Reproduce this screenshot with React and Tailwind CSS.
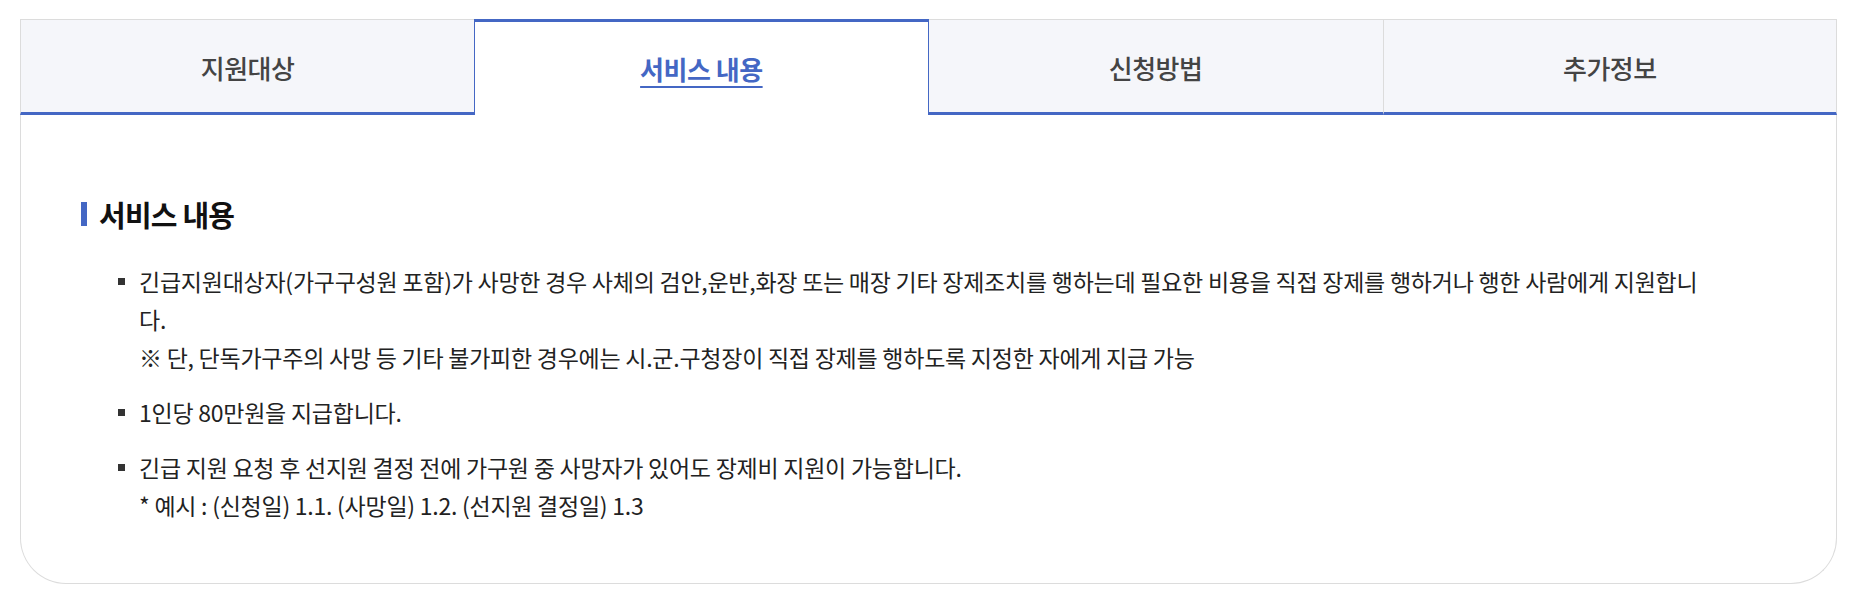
import React from "react";

const tabs = ["지원대상", "서비스 내용", "신청방법", "추가정보"];

const Bullet = ({ children }) => (
  <li className="relative pl-[21px]">
    <span className="absolute left-0 top-[16px] h-[7px] w-[7px] bg-[#333]" />
    {children}
  </li>
);

const App = () => {
  const active = 1;

  return (
    <div
      className="pl-[20px] pt-[19px] pb-[13px] bg-white"
      style={{ fontFamily: '"Noto Sans CJK KR", "Noto Sans", sans-serif' }}
    >
      <div className="w-[1817px] border border-t-0 border-[#dcdcdc] rounded-b-[46px] bg-white">
        {/* tab bar */}
        <ul className="grid grid-cols-4 -mx-px">
          {tabs.map((t, i) =>
            i === active ? (
              <li
                key={t}
                className="h-[96px] flex items-center justify-center border-t-[3px] border-x border-[#4467c4] bg-white"
              >
                <a
                  href="#"
                  className="text-[26px] font-bold text-[#4467c4] underline underline-offset-[6px] decoration-2 tracking-[-0.5px]"
                >
                  {t}
                </a>
              </li>
            ) : (
              <li
                key={t}
                className={`h-[96px] flex items-center justify-center bg-[#f5f6fa] border-t border-[#dcdcdc] border-b-[3px] border-b-[#4467c4] ${
                  i === 3 ? "border-l border-r" : i === 0 ? "border-l" : ""
                }`}
              >
                <span className="pt-[2px] text-[26px] font-medium text-[#444] tracking-[-0.5px]">
                  {t}
                </span>
              </li>
            )
          )}
        </ul>

        {/* panel */}
        <div className="pl-[60px] pr-[120px] pt-[82px] pb-[59px]">
          <h3 className="flex items-center gap-[12px] text-[29px] font-bold text-[#111] tracking-[-0.8px] leading-[34px]">
            <span className="inline-block w-[6px] h-[24px] bg-[#4467c4]" />
            서비스 내용
          </h3>

          <ul className="mt-[31px] pl-[37px] flex flex-col gap-[17px] text-[23px] leading-[38px] text-[#222] tracking-[-0.25px]">
            <Bullet>
              긴급지원대상자(가구구성원 포함)가 사망한 경우 사체의 검안,운반,화장 또는 매장 기타 장제조치를
              행하는데 필요한 비용을 직접 장제를 행하거나 행한 사람에게 지원합니다.
              <br />※ 단, 단독가구주의 사망 등 기타 불가피한 경우에는 시.군.구청장이 직접 장제를 행하도록 지정한 자에게 지급 가능
            </Bullet>
            <Bullet>1인당 80만원을 지급합니다.</Bullet>
            <Bullet>
              긴급 지원 요청 후 선지원 결정 전에 가구원 중 사망자가 있어도 장제비 지원이 가능합니다.
              <br />* 예시 : (신청일) 1.1. (사망일) 1.2. (선지원 결정일) 1.3
            </Bullet>
          </ul>
        </div>
      </div>
    </div>
  );
};

export default App;
